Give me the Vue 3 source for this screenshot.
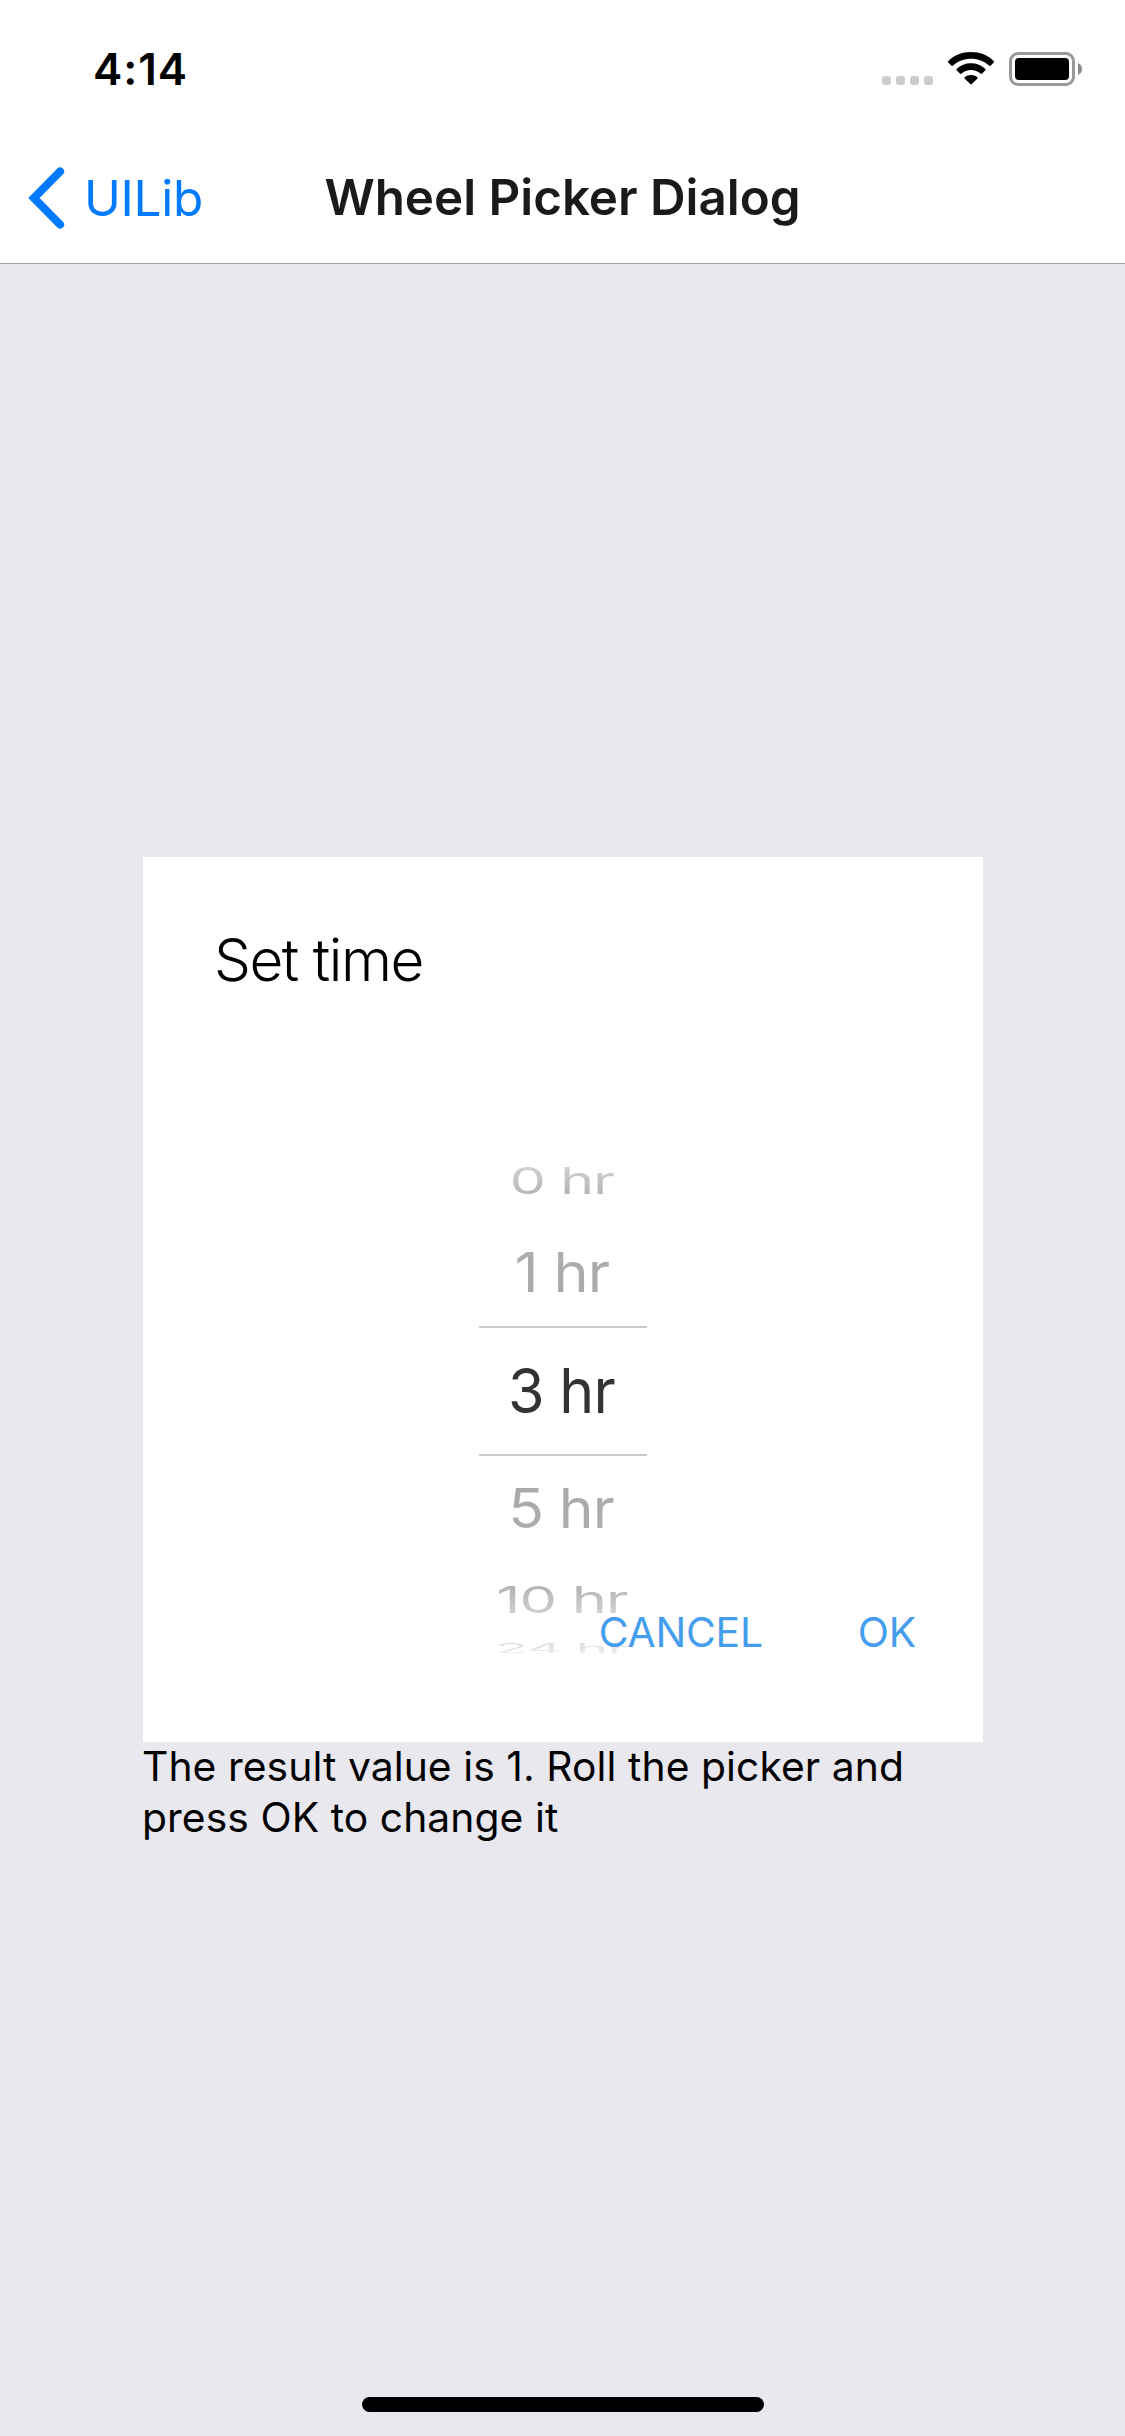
<script setup>
const rows = [
  { label: '0 hr', height: 78, sx: 0.931, sy: 0.604, from: '#d0d0d0', to: '#b4b4b4' },
  { label: '1 hr', height: 106, sx: 0.967, sy: 0.884, from: '#adadad', to: '#a9a9a9' },
  { label: '3 hr', height: 130, sx: 0.962, sy: 1, from: '#333333', to: '#333333', selected: true },
  { label: '5 hr', height: 105, sx: 0.957, sy: 0.884, from: '#a9a9a9', to: '#adadad' },
  { label: '10 hr', height: 78, sx: 0.966, sy: 0.604, from: '#b4b4b4', to: '#d0d0d0' },
  { label: '24 hr', height: 17, sx: 0.896, sy: 0.205, from: '#dedede', to: '#ececec' },
]

const rowStyle = (row) => ({ height: `${row.height}px` })
const labelStyle = (row) => ({
  transform: `scale(${row.sx}, ${row.sy})`,
  backgroundImage: `linear-gradient(${row.from} 20%, ${row.to} 80%)`,
})
</script>

<template>
  <div class="screen">
    <header class="header">
      <div class="status">
        <span class="time">4:14</span>
        <div class="indicators">
          <div class="signal"><i v-for="n in 4" :key="n"></i></div>
          <svg class="wifi" width="46" height="33" viewBox="0 0 46 33">
            <path d="M23 0C31.9 0 39.8 3.3 45.4 8.8C46.1 9.5 46.1 10.2 45.5 10.8L42.8 13.5C42.2 14.1 41.5 14.1 40.9 13.5C36.2 9.2 29.9 6.8 23 6.8S9.8 9.2 5.1 13.5C4.5 14.1 3.8 14.1 3.2 13.5L.5 10.8C-.1 10.2-.1 9.5.6 8.8C6.2 3.3 14.1 0 23 0Z" />
            <path d="M23 11.2C28.7 11.2 33.6 13.2 37.1 16.7C37.7 17.3 37.7 18 37.1 18.6L34.2 21.5C33.6 22.1 33 22.1 32.4 21.5C29.9 19.3 26.6 18 23 18S16.1 19.3 13.6 21.5C13 22.1 12.4 22.1 11.8 21.5L8.9 18.6C8.3 18 8.3 17.3 8.9 16.7C12.4 13.2 17.3 11.2 23 11.2Z" />
            <path d="M23 22.9C25.6 22.9 27.6 23.6 29.1 24.9C29.8 25.5 29.8 26.1 29.2 26.7L23.8 32.1C23.3 32.6 22.7 32.6 22.2 32.1L16.8 26.7C16.2 26.1 16.2 25.5 16.9 24.9C18.4 23.6 20.4 22.9 23 22.9Z" />
          </svg>
          <svg class="battery" width="73" height="34" viewBox="0 0 73 34">
            <rect x="1.5" y="1.5" width="63" height="31" rx="7.5" fill="none" stroke="#999" stroke-width="3" />
            <rect x="6" y="6" width="54" height="22" rx="4" />
            <path d="M69 11C71.5 12 73 14.3 73 17S71.5 22 69 23Z" fill="#8c8c8c" />
          </svg>
        </div>
      </div>
      <nav class="nav">
        <a class="back">
          <svg width="38" height="64" viewBox="0 0 38 64">
            <path d="M33 5.5L7 32L33 58.5" fill="none" stroke="#007aff" stroke-width="8.2" stroke-linecap="round" stroke-linejoin="miter" />
          </svg>
          <span>UILib</span>
        </a>
        <h1 class="title">Wheel Picker Dialog</h1>
        <span></span>
      </nav>
    </header>

    <main class="content">
      <section class="card">
        <h2 class="heading">Set time</h2>
        <div class="wheel">
          <div v-for="row in rows" :key="row.label" class="row" :class="{ selected: row.selected }" :style="rowStyle(row)">
            <span class="label" :style="labelStyle(row)">{{ row.label }}</span>
          </div>
        </div>
        <div class="actions">
          <span class="action">CANCEL</span>
          <span class="action">OK</span>
        </div>
      </section>
      <p class="result">The result value is 1. Roll the picker and press OK to change it</p>
    </main>

    <footer class="home"><div class="home-bar"></div></footer>
  </div>
</template>

<style>
body {
  margin: 0;
}
</style>

<style scoped>
.screen {
  width: 1125px;
  height: 2436px;
  display: flex;
  flex-direction: column;
  background: #e9e8ee;
  font-family: Inter, "Liberation Sans", sans-serif;
  color: #000;
  overflow: hidden;
}
.header {
  height: 264px;
  box-sizing: border-box;
  flex: none;
  background: #fff;
  border-bottom: 1px solid #a0a0a2;
}
.status {
  height: 132px;
  display: flex;
  justify-content: space-between;
  box-sizing: border-box;
  padding: 52px 43px 0 93px;
}
.time {
  font-size: 44px;
  font-weight: 600;
  line-height: 34px;
  letter-spacing: 0.9px;
}
.indicators {
  display: flex;
  align-items: flex-start;
}
.signal {
  display: flex;
  gap: 5px;
  margin: 24px 15px 0 0;
}
.signal i {
  width: 9px;
  height: 9px;
  border-radius: 3px;
  background: #ccc;
}
.wifi {
  margin-right: 15px;
}
.nav {
  height: 131px;
  display: grid;
  grid-template-columns: 1fr auto 1fr;
  align-items: center;
}
.back {
  display: flex;
  align-items: center;
  padding-left: 27px;
  color: #007aff;
  font-size: 49.5px;
  line-height: 64px;
  letter-spacing: -0.3px;
}
.back span {
  margin-left: 19px;
}
.title {
  margin: 0 0 2px;
  font-size: 49.3px;
  font-weight: 600;
  line-height: 64px;
  color: #1a1a1a;
}
.content {
  flex: 1;
  width: 840px;
  margin: 0 142px 0 143px;
  padding-top: 593px;
}
.card {
  position: relative;
  height: 885px;
  background: #fff;
}
.heading {
  margin: 0;
  padding: 68px 0 0 71px;
  font-size: 58.5px;
  font-weight: 300;
  line-height: 70px;
  letter-spacing: -1.5px;
}
.wheel {
  width: 168px;
  margin: 147px auto 0;
  display: flex;
  flex-direction: column;
}
.row {
  display: flex;
  align-items: center;
  justify-content: center;
  box-sizing: border-box;
}
.selected {
  border-top: 2px solid #ccc;
  border-bottom: 2px solid #ccc;
}
.label {
  flex: none;
  margin-right: 3px;
  font-size: 61.5px;
  line-height: 74px;
  letter-spacing: -1px;
  white-space: nowrap;
  color: transparent;
  background-clip: text;
  -webkit-background-clip: text;
}
.actions {
  position: absolute;
  right: 67px;
  bottom: 84px;
  display: flex;
  gap: 95px;
}
.action {
  font-size: 40.8px;
  line-height: 51px;
  letter-spacing: -0.2px;
  color: #459eed;
}
.result {
  margin: -1px 0 0 -1px;
  font-size: 40.8px;
  line-height: 51px;
  letter-spacing: 0.07px;
}
.home {
  height: 39px;
  flex: none;
}
.home-bar {
  width: 402px;
  height: 15px;
  margin: 0 auto;
  border-radius: 8px;
  background: #000;
}
</style>
